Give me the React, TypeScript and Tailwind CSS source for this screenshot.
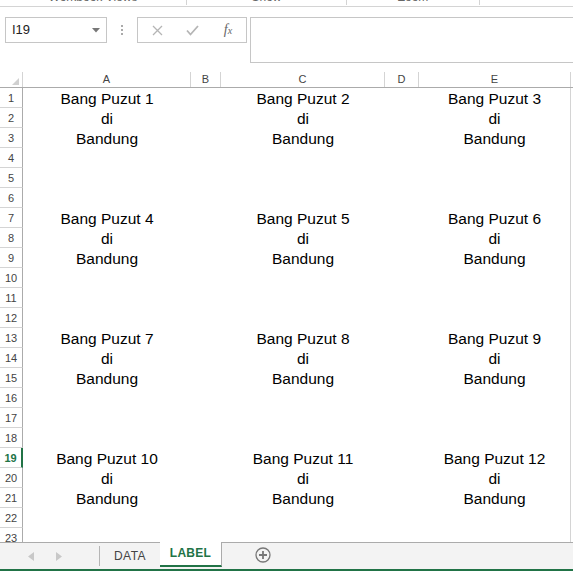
import React from "react";

const cols = [
  { key: "A", w: "w-[168px]" },
  { key: "B", w: "w-[30px]" },
  { key: "C", w: "w-[164px]" },
  { key: "D", w: "w-[34px]" },
  { key: "E", w: "w-[152px]" },
];

function cellText(row: number, col: string) {
  const block = Math.floor((row - 1) / 6);
  const line = (row - 1) % 6;
  const idx = col === "A" ? 1 : col === "C" ? 2 : col === "E" ? 3 : 0;
  if (!idx) return "";
  if (line === 0) return `Bang Puzut ${block * 3 + idx}`;
  if (line === 1) return "di";
  if (line === 2) return "Bandung";
  return "";
}

export default function App() {
  const rows = Array.from({ length: 23 }, (_, i) => i + 1);
  const selectedRow = 19;

  return (
    <div className="w-[573px] h-[571px] overflow-hidden bg-white flex flex-col font-['Liberation_Sans',Arial,sans-serif] text-[#222]">
      {/* ribbon bottom edge, group labels clipped as in the window */}
      <div className="h-[7px] shrink-0 border-b border-[#d4d4d4] flex items-end overflow-hidden text-[12px] text-[#666]">
        <div className="w-[187px] flex justify-center border-r border-[#d4d4d4] h-[5px] self-start items-end">
          <span className="leading-[12px] mb-[2px]">Workbook Views</span>
        </div>
        <div className="w-[160px] flex justify-center border-r border-[#d4d4d4] h-[5px] self-start items-end">
          <span className="leading-[12px] mb-[2px]">Show</span>
        </div>
        <div className="w-[133px] flex justify-center border-r border-[#d4d4d4] h-[5px] self-start items-end">
          <span className="leading-[12px] mb-[2px]">Zoom</span>
        </div>
      </div>

      {/* name box + formula bar */}
      <div className="h-[65px] shrink-0 pt-[10px] flex items-start">
        <div className="ml-[5px] w-[102px] h-[26px] border border-[#c6c6c6] flex items-center justify-between pl-[6px] pr-[6px]">
          <span className="text-[13px] text-[#222]">I19</span>
          <svg width="8" height="5" viewBox="0 0 8 5">
            <path d="M0 0 L8 0 L4 4.5 Z" fill="#777" />
          </svg>
        </div>
        <div className="w-[30px] h-[26px] flex flex-col items-center justify-center gap-[2px]">
          <span className="w-[2px] h-[2px] bg-[#aaa]" />
          <span className="w-[2px] h-[2px] bg-[#aaa]" />
          <span className="w-[2px] h-[2px] bg-[#aaa]" />
        </div>
        <div className="w-[110px] h-[26px] border border-[#c6c6c6] flex items-center">
          <div className="w-[36px] flex justify-center pl-[2px]">
            <svg width="11" height="11" viewBox="0 0 11 11">
              <path d="M1 1 L10 10 M10 1 L1 10" stroke="#b5b5b5" strokeWidth="1.3" />
            </svg>
          </div>
          <div className="w-[36px] flex justify-center">
            <svg width="13" height="11" viewBox="0 0 13 11">
              <path d="M1 5.5 L4.5 9.5 L12 1" stroke="#b5b5b5" strokeWidth="1.8" fill="none" />
            </svg>
          </div>
          <div className="w-[36px] flex justify-center">
            <span className="italic font-['Liberation_Serif',serif] text-[14px] text-[#666] leading-none">
              f<span className="text-[10px]">x</span>
            </span>
          </div>
        </div>
        <div className="ml-[3px] flex-1 h-[46px] border-y border-l border-[#c6c6c6]" />
      </div>

      {/* grid */}
      <div className="flex-1 overflow-hidden flex flex-col">
        <div className="h-[16px] shrink-0 flex border-b border-[#ababab] text-[11px] text-[#444] leading-none">
          <div className="w-[23px] border-r border-[#d4d4d4] flex items-end justify-end pr-[3px] pb-[2px]">
            <svg width="7" height="7" viewBox="0 0 7 7">
              <path d="M7 0 L7 7 L0 7 Z" fill="#d0d0d0" />
            </svg>
          </div>
          {cols.map((c) => (
            <div key={c.key} className={`${c.w} border-r border-[#d4d4d4] flex items-center justify-center`}>
              {c.key}
            </div>
          ))}
        </div>
        {rows.map((r) => (
          <div key={r} className="h-[20px] shrink-0 flex">
            <div
              className={
                r === selectedRow
                  ? "w-[23px] border-b border-[#d4d4d4] border-r-2 border-r-[#217346] flex items-center justify-center pt-[2px] text-[11px] font-bold text-[#217346]"
                  : "w-[23px] border-b border-[#d4d4d4] border-r border-r-[#ababab] flex items-center justify-center pt-[2px] text-[11px] text-[#444]"
              }
            >
              {r}
            </div>
            {cols.map((c) => (
              <div
                key={c.key}
                className={`${c.w} ${c.key === "E" ? "border-r border-[#d4d4d4]" : ""} flex items-end justify-center text-[15.5px] leading-[19px] text-black whitespace-nowrap`}
              >
                {cellText(r, c.key)}
              </div>
            ))}
          </div>
        ))}
      </div>

      {/* sheet tabs */}
      <div className="h-[29px] shrink-0 bg-[#f3f3f3] border-b-2 border-[#217346] flex items-stretch">
        <div className="w-[100px] border-t border-[#ababab] flex items-center">
          <div className="w-[28px]" />
          <svg width="6" height="9" viewBox="0 0 6 9">
            <path d="M6 0 L6 9 L0 4.5 Z" fill="#c8c8c8" />
          </svg>
          <div className="w-[22px]" />
          <svg width="6" height="9" viewBox="0 0 6 9">
            <path d="M0 0 L0 9 L6 4.5 Z" fill="#c8c8c8" />
          </svg>
          <div className="ml-auto w-px h-[20px] bg-[#b5b5b5]" />
        </div>
        <div className="w-[60px] border-t border-[#ababab] flex items-center justify-center text-[12px] text-[#444] tracking-[0.5px]">
          DATA
        </div>
        <div className="w-[62px] bg-white border-r border-[#ababab] flex items-center justify-center pb-[2px] mb-[2px] border-b-2 border-b-[#217346] text-[12px] font-bold text-[#217346] tracking-[0.3px]">
          LABEL
        </div>
        <div className="flex-1 border-t border-[#ababab] flex items-center pl-[33px] pb-[2px]">
          <svg width="16" height="16" viewBox="0 0 16 16">
            <circle cx="8" cy="8" r="7" stroke="#777" strokeWidth="1.3" fill="none" />
            <path d="M8 4 L8 12 M4 8 L12 8" stroke="#777" strokeWidth="1.8" />
          </svg>
        </div>
      </div>
    </div>
  );
}
